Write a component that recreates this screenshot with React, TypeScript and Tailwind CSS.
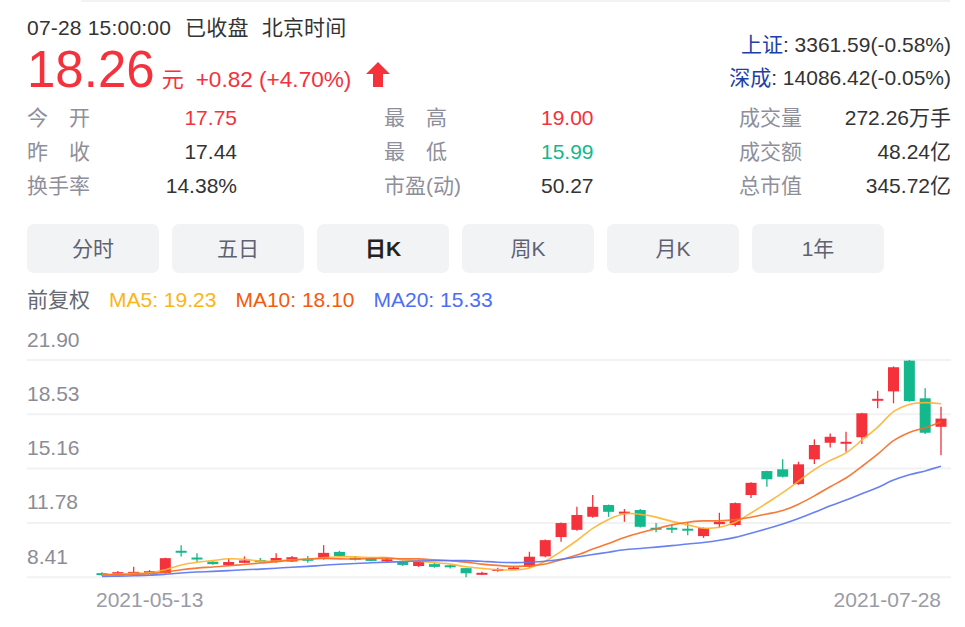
import type { ReactNode } from 'react'

// --- Data --------------------------------------------------------------------

type Candle = [open: number, close: number, low: number, high: number]

const RED = '#f5313c'
const GREEN = '#13b88c'

// 2021-05-13 .. 2021-07-28, one entry per trading day
const CANDLES: Candle[] = [
  [8.66, 8.54, 8.5, 8.72],
  [8.6, 8.72, 8.55, 8.8],
  [8.66, 8.74, 8.62, 9.05],
  [8.72, 8.78, 8.68, 8.85],
  [8.66, 9.59, 8.62, 9.62],
  [10.05, 10.0, 9.7, 10.4],
  [9.63, 9.59, 9.35, 9.9],
  [9.37, 9.22, 9.18, 9.4],
  [9.15, 9.35, 9.1, 9.55],
  [9.3, 9.45, 9.28, 9.7],
  [9.47, 9.43, 9.3, 9.6],
  [9.35, 9.6, 9.3, 9.9],
  [9.38, 9.65, 9.35, 9.72],
  [9.55, 9.5, 9.3, 9.72],
  [9.55, 9.92, 9.5, 10.4],
  [9.98, 9.72, 9.7, 10.05],
  [9.62, 9.58, 9.45, 9.72],
  [9.6, 9.42, 9.4, 9.65],
  [9.48, 9.52, 9.35, 9.6],
  [9.35, 9.17, 9.1, 9.4],
  [9.1, 9.35, 9.05, 9.5],
  [9.22, 9.05, 9.0, 9.3],
  [9.15, 9.05, 8.95, 9.2],
  [8.97, 8.65, 8.4, 9.0],
  [8.6, 8.68, 8.55, 8.75],
  [8.88, 8.92, 8.75, 9.0],
  [8.97, 9.01, 8.9, 9.05],
  [9.05, 9.68, 9.0, 9.99],
  [9.7, 10.71, 9.65, 10.75],
  [10.9, 11.77, 10.61, 11.8],
  [11.35, 12.27, 11.3, 12.78],
  [12.16, 12.78, 12.1, 13.51],
  [12.89, 12.47, 12.16, 12.92],
  [12.42, 12.48, 11.85, 12.64],
  [12.58, 11.54, 11.5, 12.65],
  [11.48, 11.44, 11.2, 11.77],
  [11.48, 11.43, 11.15, 11.65],
  [11.42, 11.38, 11.02, 11.77],
  [10.96, 11.46, 10.85, 11.5],
  [11.7, 11.85, 11.46, 12.41],
  [11.65, 13.01, 11.55, 13.05],
  [13.51, 14.27, 13.32, 14.3],
  [15.0, 14.49, 14.03, 15.02],
  [15.11, 14.65, 14.6, 15.73],
  [14.19, 15.42, 14.15, 15.58],
  [15.73, 16.62, 15.44, 16.97],
  [16.76, 17.13, 16.47, 17.34],
  [16.72, 16.82, 16.2, 17.44],
  [17.1, 18.59, 16.68, 18.62],
  [19.37, 19.49, 18.9, 19.99],
  [19.95, 21.45, 19.21, 21.5],
  [21.86, 19.35, 19.3, 21.9],
  [19.52, 17.38, 17.3, 20.14],
  [17.75, 18.26, 15.99, 19.0],
]

// closes before the visible window, only used to warm up the MAs
const PRIOR = [8.25, 8.3, 8.28, 8.35, 8.32, 8.4, 8.38, 8.45, 8.42, 8.5, 8.48, 8.45, 8.52, 8.5, 8.55, 8.58, 8.56, 8.6, 8.62]

const GRID = [21.9, 18.53, 15.16, 11.78, 8.41]

// --- Chart geometry ----------------------------------------------------------

const SVG_TOP = 312
const GRID_TOP = 360
const GRID_GAP = 54.25
const yOf = (p: number) => GRID_TOP - SVG_TOP + ((GRID[0] - p) * GRID_GAP) / (GRID[0] - GRID[1])
const X0 = 102
const DX = (941 - X0) / (CANDLES.length - 1)
const xOf = (i: number) => X0 + i * DX

function movingAverage(n: number) {
  const closes = [...PRIOR, ...CANDLES.map((c) => c[1])]
  return CANDLES.map((_, i) => {
    const end = PRIOR.length + i + 1
    const slice = closes.slice(Math.max(0, end - n), end)
    return slice.reduce((a, b) => a + b, 0) / slice.length
  })
}

function smoothPath(pts: [number, number][]) {
  let d = `M${pts[0][0]},${pts[0][1]}`
  for (let i = 0; i < pts.length - 1; i++) {
    const p0 = pts[Math.max(0, i - 1)]
    const p1 = pts[i]
    const p2 = pts[i + 1]
    const p3 = pts[Math.min(pts.length - 1, i + 2)]
    const c1x = p1[0] + (p2[0] - p0[0]) / 6
    const c1y = p1[1] + (p2[1] - p0[1]) / 6
    const c2x = p2[0] - (p3[0] - p1[0]) / 6
    const c2y = p2[1] - (p3[1] - p1[1]) / 6
    d += ` C${c1x.toFixed(1)},${c1y.toFixed(1)} ${c2x.toFixed(1)},${c2y.toFixed(1)} ${p2[0].toFixed(1)},${p2[1].toFixed(1)}`
  }
  return d
}

const MA_LINES = [
  { n: 5, color: '#ffb22e' },
  { n: 10, color: '#f66b22' },
  { n: 20, color: '#5873f2' },
]

// --- Pieces ------------------------------------------------------------------

function Spread({ chars }: { chars: string }) {
  return (
    <span className="flex w-[63px] justify-between">
      {chars.split('').map((c) => (
        <span key={c}>{c}</span>
      ))}
    </span>
  )
}

function StatRow({ l1, v1, c1, l2, v2, c2, l3, v3 }: {
  l1: ReactNode
  v1: string
  c1: string
  l2: ReactNode
  v2: string
  c2: string
  l3: string
  v3: string
}) {
  return (
    <div className="flex h-[34px] items-center leading-[34px]">
      <span className="w-[63px] text-[#8e8f9b]">{l1}</span>
      <span className={`w-[147px] text-right ${c1}`}>{v1}</span>
      <span className="w-[147px]" />
      <span className="w-[157px] text-[#8e8f9b]">{l2}</span>
      <span className={`w-[198px] ${c2}`}>{v2}</span>
      <span className="w-[63px] text-[#8e8f9b]">{l3}</span>
      <span className="w-[149px] text-right text-[#333]">{v3}</span>
    </div>
  )
}

function UpArrow() {
  return (
    <svg width="24" height="25" viewBox="0 0 24 25" className="ml-[15px] self-center translate-y-[4px]">
      <path d="M12 0 L24 12 L17 12 L17 25 L7 25 L7 12 L0 12 Z" fill={RED} />
    </svg>
  )
}

function KChart() {
  const bodyW = 11
  return (
    <svg width="965" height="315" className="block">
      {GRID.map((p) => (
        <g key={p}>
          <line x1="27" x2="951" y1={yOf(p)} y2={yOf(p)} stroke="#f2f2f4" strokeWidth="2" />
          <text x="27" y={yOf(p) - 13.5} fill="#8b8d96" fontSize="21">
            {p.toFixed(2)}
          </text>
        </g>
      ))}

      {CANDLES.map(([o, c, l, h], i) => {
        const up = c >= o
        const color = up ? RED : GREEN
        const x = xOf(i)
        const top = yOf(Math.max(o, c))
        const bh = Math.max(2, yOf(Math.min(o, c)) - top)
        return (
          <g key={i}>
            <line x1={x} x2={x} y1={yOf(h)} y2={yOf(l)} stroke={color} strokeWidth="1.3" />
            <rect x={x - bodyW / 2} y={top} width={bodyW} height={bh} fill={color} />
          </g>
        )
      })}

      {MA_LINES.map(({ n, color }) => {
        const ma = movingAverage(n)
        const pts = ma.map((v, i) => [xOf(i), yOf(v)] as [number, number])
        return <path key={n} d={smoothPath(pts)} fill="none" stroke={color} strokeWidth="1.6" strokeOpacity="0.9" />
      })}

      <text x="96" y={607.3 - SVG_TOP} fill="#9a9ca5" fontSize="21">
        2021-05-13
      </text>
      <text x="941" y={607.3 - SVG_TOP} fill="#9a9ca5" fontSize="21" textAnchor="end">
        2021-07-28
      </text>
    </svg>
  )
}

// --- Page --------------------------------------------------------------------

const TABS = ['分时', '五日', '日K', '周K', '月K', '1年']

export default function App() {
  return (
    <div className="h-[627px] w-[965px] overflow-hidden bg-white font-['Liberation_Sans','Noto_Sans_CJK_SC',sans-serif] text-[21px] text-[#333]">
      <div className="ml-[81px] h-[2px] w-[869px] bg-[#f2f2f2]" />

      {/* Quote header */}
      <div className="mt-[14px] flex justify-between pl-[27px] pr-[14px]">
        <div>
          <div className="flex h-[24px] items-center leading-[24px] tracking-[0.2px]">
            <span>07-28 15:00:00</span>
            <span className="ml-[14px]">已收盘</span>
            <span className="ml-[13px]">北京时间</span>
          </div>
          <div className="mt-[2px] flex h-[56px] items-baseline text-[#f5313c]">
            <span className="text-[51px] leading-[56px]">18.26</span>
            <span className="ml-[7px] text-[22px]">元</span>
            <span className="ml-[12px] text-[22.6px]">+0.82 (+4.70%)</span>
            <UpArrow />
          </div>
        </div>
        <div className="mt-[12px] flex flex-col items-end leading-[33px]">
          <div>
            <span className="text-[#1f3fa8]">上证</span>: 3361.59(-0.58%)
          </div>
          <div>
            <span className="text-[#1f3fa8]">深成</span>: 14086.42(-0.05%)
          </div>
        </div>
      </div>

      {/* Stats */}
      <div className="mt-[3px] pl-[27px]">
        <StatRow l1={<Spread chars="今开" />} v1="17.75" c1="text-[#f5313c]" l2={<Spread chars="最高" />} v2="19.00" c2="text-[#f5313c]" l3="成交量" v3="272.26万手" />
        <StatRow l1={<Spread chars="昨收" />} v1="17.44" c1="text-[#333]" l2={<Spread chars="最低" />} v2="15.99" c2="text-[#13b88c]" l3="成交额" v3="48.24亿" />
        <StatRow l1="换手率" v1="14.38%" c1="text-[#333]" l2="市盈(动)" v2="50.27" c2="text-[#333]" l3="总市值" v3="345.72亿" />
      </div>

      {/* Period tabs */}
      <div className="mt-[21px] flex gap-[13px] pl-[27px]">
        {TABS.map((t) => (
          <div
            key={t}
            className={`flex h-[49px] w-[132px] items-center justify-center rounded-[7px] bg-[#f2f3f5] ${
              t === '日K' ? 'font-bold text-[#222]' : 'text-[#5e6270]'
            }`}
          >
            {t}
          </div>
        ))}
      </div>

      {/* MA legend */}
      <div className="mt-[15px] flex h-[24px] items-center gap-[19px] pl-[27px] leading-[24px]">
        <span className="text-[#666a75]">前复权</span>
        <span className="text-[#fbb614]">MA5: 19.23</span>
        <span className="text-[#f7590c]">MA10: 18.10</span>
        <span className="text-[#4c6ef5]">MA20: 15.33</span>
      </div>

      <KChart />
    </div>
  )
}
